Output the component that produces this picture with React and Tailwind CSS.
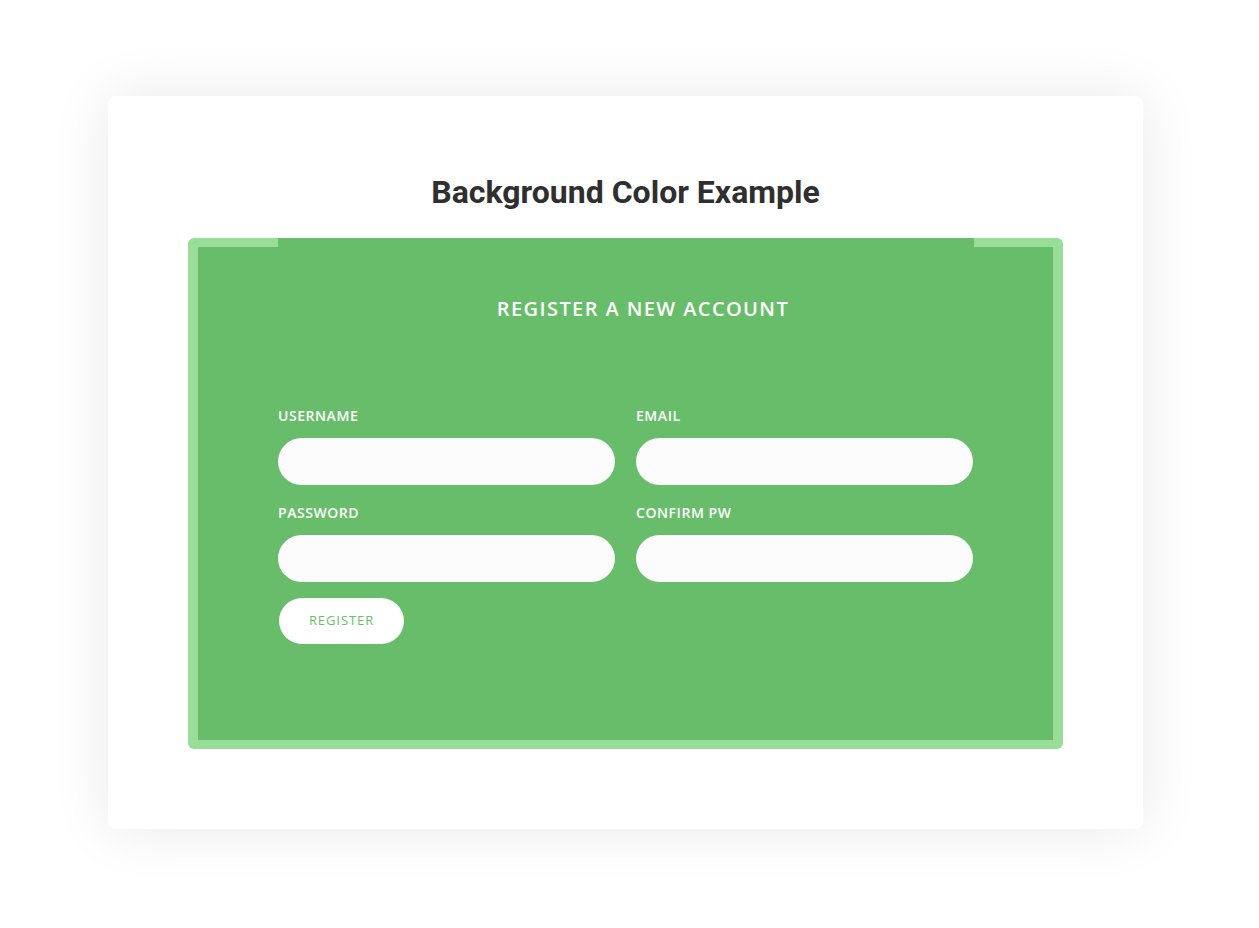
import React from 'react';

const Field = ({ label }) => (
    <div className="flex flex-col">
        <label className="text-[14px] font-semibold text-white tracking-[0.04em] leading-[16px] mb-[14px]">{label}</label>
        <input type="text" className="h-[47px] w-full rounded-full bg-[#fcfcfc] outline-none px-5" />
    </div>
);

export default function App() {
    return (
        <div className="min-h-[928px] w-full bg-white pt-[96px]" style={{ fontFamily: "'Open Sans', sans-serif" }}>
            <div className="ml-[108px] w-[1035px] h-[733px] rounded-lg bg-white shadow-[0_0_60px_rgba(0,0,0,0.09)] px-[80px] pt-[76px]">
                {/* Title */}
                <h1 className="text-center text-[32px] leading-[40px] font-bold text-[#2f2f2f] mb-[26px]" style={{ fontFamily: 'Roboto, sans-serif' }}>
                    Background Color Example
                </h1>

                {/* Green form box */}
                <div className="rounded-md bg-[#98dd98] px-[10px] pb-[9px]">
                    <div className="flex h-[9px]">
                        <div className="w-[80px]" />
                        <div className="flex-1 bg-[#68bd6a]" />
                        <div className="w-[79px]" />
                    </div>
                    <div className="bg-[#68bd6a] h-[493px] px-[80px] pt-[50px]">
                        <h2 className="text-center pl-[35px] text-[20px] leading-[24px] font-semibold text-white tracking-[0.07em]">
                            REGISTER A NEW ACCOUNT
                        </h2>

                        <div className="mt-[87px] grid grid-cols-2 gap-x-[21px] gap-y-[20px]">
                            <Field label="USERNAME" />
                            <Field label="EMAIL" />
                            <Field label="PASSWORD" />
                            <Field label="CONFIRM PW" />
                        </div>

                        <button className="mt-[16px] ml-[1px] h-[46px] w-[125px] rounded-full bg-white text-[13px] text-[#6abf6c] tracking-[0.07em]">
                            REGISTER
                        </button>
                    </div>
                </div>
            </div>
        </div>
    );
}
